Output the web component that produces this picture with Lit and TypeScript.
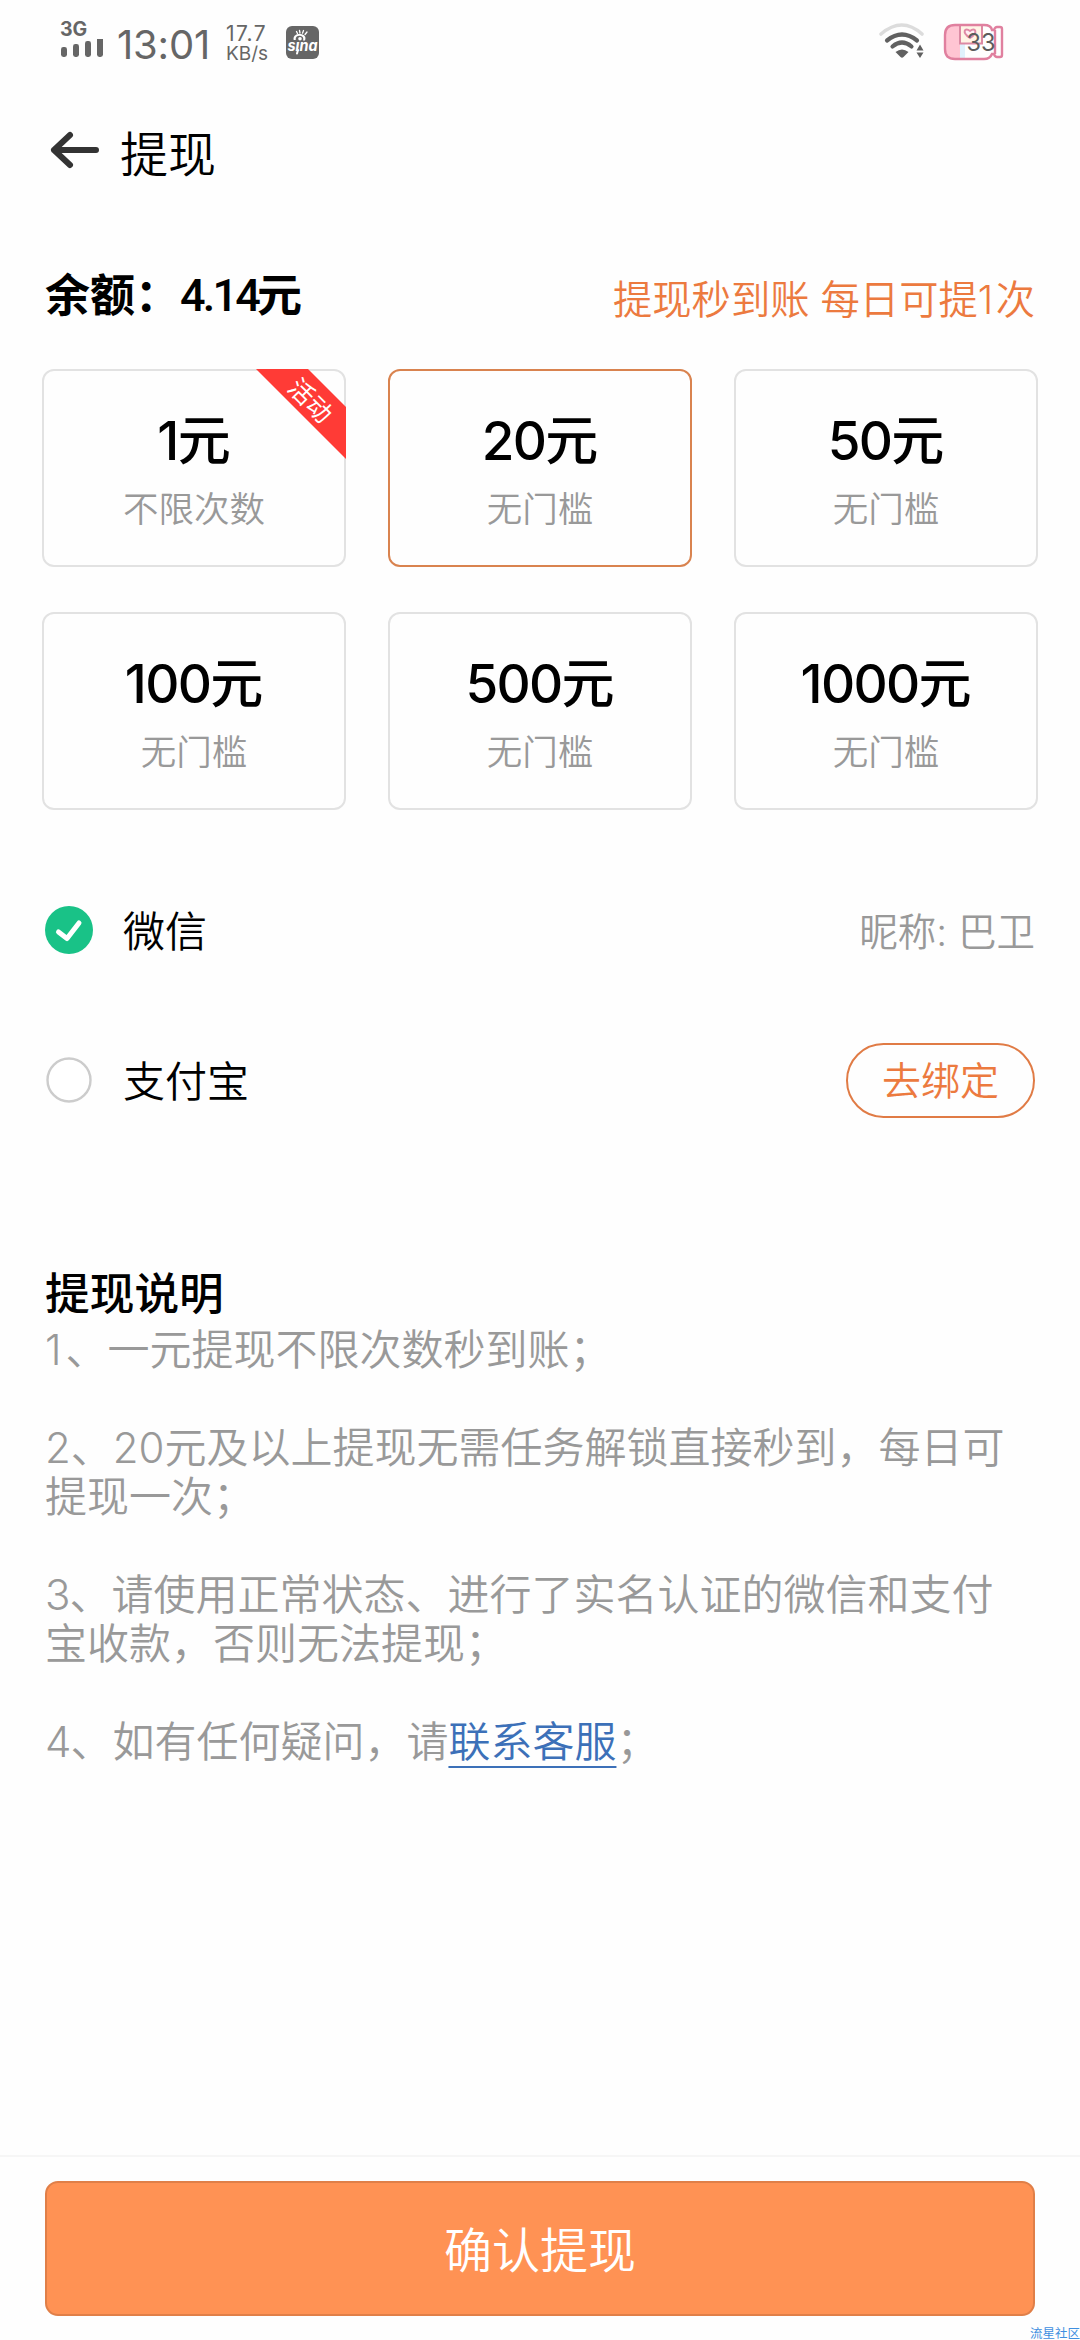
import { LitElement, html, svg, css, nothing } from "lit";
import { customElement, state } from "lit/decorators.js";

interface Plan {
  amount: number;
  note: string;
  promo?: string;
}

const PLANS: Plan[] = [
  { amount: 1, note: "不限次数", promo: "活动" },
  { amount: 20, note: "无门槛" },
  { amount: 50, note: "无门槛" },
  { amount: 100, note: "无门槛" },
  { amount: 500, note: "无门槛" },
  { amount: 1000, note: "无门槛" },
];

const SIGNAL_BARS = [10, 13, 16, 20];

@customElement("status-bar")
class StatusBar extends LitElement {
  static styles = css`
    :host {
      display: flex;
      justify-content: space-between;
      height: 84px;
      box-sizing: border-box;
      padding: 0 76px 0 60px;
      color: #666;
      font-family: Inter, "Noto Sans CJK SC", sans-serif;
    }
    .side {
      display: flex;
      align-items: flex-start;
    }
    .cell {
      display: flex;
      flex-direction: column;
      width: 43px;
      margin: 20px 14px 0 0;
    }
    .net {
      font-size: 19.5px;
      line-height: 19px;
      font-weight: 700;
    }
    .time {
      width: 109px;
      margin-top: 20px;
      font-size: 40px;
      line-height: 50px;
      letter-spacing: -0.2px;
    }
    .speed {
      display: flex;
      flex-direction: column;
      width: 60px;
      margin-top: 23px;
      line-height: 20px;
    }
    .rate {
      font-size: 21px;
      line-height: 21px;
      letter-spacing: 1.4px;
    }
    .unit {
      font-size: 19px;
    }
    svg {
      display: block;
    }
    .sina {
      margin-top: 26px;
    }
    .wifi {
      margin: 22px 15px 0 0;
    }
    .battery {
      margin-top: 22px;
    }
  `;

  render() {
    return html`
      <div class="side">
        <div class="cell">
          <span class="net">3G</span>
          <svg width="43" height="20" viewBox="0 0 43 20">
            ${SIGNAL_BARS.map(
              (h, i) => svg`<rect x=${1 + i * 12} y=${18 - h} width="6" height=${h} rx="2.4" fill="#666"/>`
            )}
          </svg>
        </div>
        <span class="time">13:01</span>
        <div class="speed"><span class="rate">17.7</span><span class="unit">KB/s</span></div>
        <svg class="sina" width="33" height="33" viewBox="0 0 33 33">
          <rect width="33" height="33" rx="6" fill="#666" />
          <path d="M7.500 13C7.500 8.500 12 7.500 14.500 8C18.500 8.500 20.500 11 19 14.500H17C18 12 16.500 10 14 9.800C11 9.600 9.500 11 9.700 14H7.700Z" fill="#fff" />
          <circle cx="14" cy="12.800" r="1.800" fill="#fff" />
          <path d="M11.500 7.500L10.500 5.500M14 7L13.500 4.500M16.500 7.200L17.500 4.500M19 8.500L21 6" fill="none" stroke="#fff" stroke-width="1.300" stroke-linecap="round" />
          <text x="1.500" y="24.500" font-size="15" font-weight="700" font-style="italic" fill="#fff" textLength="30" lengthAdjust="spacingAndGlyphs">sına</text>
          <path d="M12 24L11 27.500" stroke="#fff" stroke-width="2" stroke-linecap="round" />
        </svg>
      </div>
      <div class="side">
        <svg class="wifi" width="50" height="40" viewBox="0 0 50 40">
          <g fill="none" stroke-linecap="round">
            <path d="M3 12Q24-6 44 12" stroke="#dcdcdc" stroke-width="3.600" />
            <path d="M9 18.500Q24 6.500 39 18.500" stroke="#606060" stroke-width="4.200" />
            <path d="M14.500 24.500Q24 16.500 33.500 24.500" stroke="#606060" stroke-width="4.200" />
          </g>
          <path d="M17.500 30Q24 25 30.500 30L25.500 35Q24 36.500 22.500 35Z" fill="#606060" />
          <path d="M38.500 28.500L42 22.500L45.500 28.500ZM38.500 30.500L42 36L45.500 30.500Z" fill="#606060" />
        </svg>
        <svg class="battery" width="61" height="40" viewBox="0 0 61 40">
          <path d="M17 3H12Q2 3 2 13V27Q2 37 12 37H17Z" fill="#ffc5d3" />
          <path d="M17 22H22V37H17Z" fill="#dff1fc" />
          <rect x="17" y="3" width="22" height="18.500" fill="#fff4e6" stroke="#dc8aa4" stroke-width="2" />
          <path d="M27 16C18 10 22 5 27 9C32 5 36 10 27 16Z" fill="#ffeef3" stroke="#e08aa6" stroke-width="2" />
          <path d="M12 3H41Q48 3 49 8H51Q52 5 54 5H57Q59 5 59 7V33Q59 35 57 35H54Q52 35 51 32H49Q47 37 41 37H12Q2 37 2 27V13Q2 3 12 3ZM52 8V32" fill="none" stroke="#e0809f" stroke-width="2.400" />
          <text x="23.500" y="28.500" font-size="24" fill="#5c5c5c" textLength="29" lengthAdjust="spacingAndGlyphs">33</text>
        </svg>
      </div>
    `;
  }
}

@customElement("plan-card")
class PlanCard extends LitElement {
  static properties = {
    plan: { attribute: false },
    selected: { type: Boolean, reflect: true },
  };
  declare plan: Plan;
  declare selected: boolean;

  static styles = css`
    :host {
      position: relative;
      display: flex;
      flex-direction: column;
      align-items: center;
      box-sizing: border-box;
      padding-top: 40px;
      border: 2px solid #e2e2e2;
      border-radius: 12px;
      cursor: pointer;
    }
    :host([selected]) {
      border-color: #d9834f;
    }
    .amount {
      font-size: 53px;
      line-height: 60px;
      font-weight: 500;
      color: #000;
      white-space: nowrap;
    }
    .digits {
      letter-spacing: -1.7px;
    }
    .note {
      margin-top: 17px;
      font-size: 35.5px;
      line-height: 44px;
      font-weight: 350;
      color: #999;
    }
    .ribbon {
      position: absolute;
      top: -2px;
      right: -2px;
      display: block;
    }
  `;

  render() {
    return html`
      <span class="amount"><span class="digits">${this.plan.amount}</span>元</span>
      <span class="note">${this.plan.note}</span>
      ${this.plan.promo
        ? html`<svg class="ribbon" width="90" height="91" viewBox="0 0 90 91">
            <path d="M0 0H52L90 38V90Z" fill="#ff3b36" />
            <text x="54" y="32" transform="rotate(45 54 32)" dy="8.500" text-anchor="middle" font-size="25" fill="#fff">${this.plan.promo}</text>
          </svg>`
        : nothing}
    `;
  }
}

@customElement("app-root")
class AppRoot extends LitElement {
  @state() private chosen = 20;

  static styles = css`
    :host {
      display: flex;
      flex-direction: column;
      width: 1080px;
      height: 2340px;
      overflow: hidden;
      position: relative;
      background: #fefefe;
      color: #000;
      font-family: Inter, "Noto Sans CJK SC", sans-serif;
    }
    svg {
      display: block;
      flex: none;
    }
    .nav {
      display: flex;
      align-items: center;
      height: 132px;
      padding-left: 48px;
      gap: 19px;
    }
    .title {
      padding-top: 9px;
      font-size: 48px;
      line-height: 60px;
      font-weight: 350;
    }
    .balance {
      display: flex;
      justify-content: space-between;
      align-items: center;
      height: 153px;
      box-sizing: border-box;
      padding: 7px 45px 0 45px;
    }
    .total {
      display: flex;
      font-size: 45px;
      line-height: 56px;
      font-weight: 700;
    }
    .figure {
      width: 77px;
      font-family: Roboto, sans-serif;
      font-weight: 500;
      font-size: 45px;
      letter-spacing: -2.8px;
    }
    .tip {
      padding-top: 8px;
      font-size: 39.3px;
      line-height: 48px;
      font-weight: 350;
      color: #ec7a3f;
    }
    .one {
      letter-spacing: 2.5px;
    }
    .plans {
      display: grid;
      grid-template-columns: repeat(3, 304px);
      grid-auto-rows: 198px;
      gap: 45px 42px;
      padding: 0 42px;
      margin-bottom: 45px;
    }
    .method {
      display: flex;
      align-items: center;
      height: 150px;
      padding: 0 45px;
      gap: 30px;
    }
    .name {
      flex: 1;
      padding-top: 4px;
      font-size: 42px;
      line-height: 52px;
      font-weight: 350;
    }
    .nick {
      padding-top: 3px;
      font-size: 38.5px;
      line-height: 48px;
      font-weight: 350;
      color: #999;
    }
    .bind {
      box-sizing: border-box;
      width: 189px;
      height: 75px;
      border: 2px solid #e07b45;
      border-radius: 38px;
      font-size: 39px;
      line-height: 72px;
      font-weight: 350;
      text-align: center;
      color: #ec7a3f;
    }
    .notes {
      flex: 1;
      padding: 111px 45px 0;
    }
    .heading {
      margin: 0 0 3px;
      font-size: 44.7px;
      line-height: 56px;
      font-weight: 500;
    }
    .rules {
      display: flex;
      flex-direction: column;
      gap: 49px;
      font-size: 42px;
      line-height: 49px;
      font-weight: 350;
      color: #999;
      white-space: nowrap;
    }
    .rule {
      margin: 0;
    }
    .lead-1 {
      letter-spacing: 4px;
    }
    .lead-3,
    .lead-4 {
      letter-spacing: -1px;
    }
    .link {
      color: #3c70b8;
      text-decoration: underline;
      text-decoration-thickness: 2px;
      text-underline-offset: 9px;
      text-decoration-skip-ink: none;
    }
    .footer {
      height: 185px;
      box-sizing: border-box;
      border-top: 2px solid #f6f6f6;
      padding: 24px 45px 0;
    }
    .confirm {
      height: 135px;
      box-sizing: border-box;
      border: 2px solid #e07f48;
      border-radius: 13px;
      background: #ff9254;
      color: #fff;
      font-size: 48px;
      line-height: 136px;
      font-weight: 350;
      text-align: center;
    }
    .mark {
      position: absolute;
      right: 0;
      bottom: 0;
      font-size: 12.5px;
      line-height: 13px;
      color: #3f8fe0;
    }
  `;

  render() {
    return html`
      <status-bar></status-bar>
      <div class="nav">
        <svg width="53" height="40" viewBox="0 0 53 40">
          <path d="M22 5L6 20L22 35M6 20H48" fill="none" stroke="#333" stroke-width="6" stroke-linecap="round" stroke-linejoin="round" />
        </svg>
        <span class="title">提现</span>
      </div>
      <div class="balance">
        <span class="total"><span>余额：</span><span class="figure">4.14</span><span>元</span></span>
        <span class="tip">提现秒到账 每日可提<span class="one">1</span>次</span>
      </div>
      <div class="plans">
        ${PLANS.map(
          (p) => html`<plan-card
            .plan=${p}
            ?selected=${p.amount === this.chosen}
            @click=${() => (this.chosen = p.amount)}
          ></plan-card>`
        )}
      </div>
      <div class="method">
        <svg width="48" height="48" viewBox="0 0 48 48">
          <circle cx="24" cy="24" r="24" fill="#19c287" />
          <path d="M13.500 26L22 32.500L34 17" fill="none" stroke="#fff" stroke-width="5" stroke-linecap="round" stroke-linejoin="round" />
        </svg>
        <span class="name">微信</span>
        <span class="nick">昵称: 巴卫</span>
      </div>
      <div class="method">
        <svg width="48" height="48" viewBox="0 0 48 48">
          <circle cx="24" cy="24" r="21.500" fill="#fff" stroke="#ccc" stroke-width="2.400" />
        </svg>
        <span class="name">支付宝</span>
        <span class="bind">去绑定</span>
      </div>
      <div class="notes">
        <h2 class="heading">提现说明</h2>
        <div class="rules">
          <p class="rule"><span class="lead-1">1</span>、一元提现不限次数秒到账；</p>
          <p class="rule">2、20元及以上提现无需任务解锁直接秒到，每日可<br />提现一次；</p>
          <p class="rule"><span class="lead-3">3</span>、请使用正常状态、进行了实名认证的微信和支付<br />宝收款，否则无法提现；</p>
          <p class="rule"><span class="lead-4">4</span>、如有任何疑问，请<span class="link">联系客服</span>；</p>
        </div>
      </div>
      <div class="footer">
        <div class="confirm">确认提现</div>
      </div>
      <span class="mark">流星社区</span>
    `;
  }
}
